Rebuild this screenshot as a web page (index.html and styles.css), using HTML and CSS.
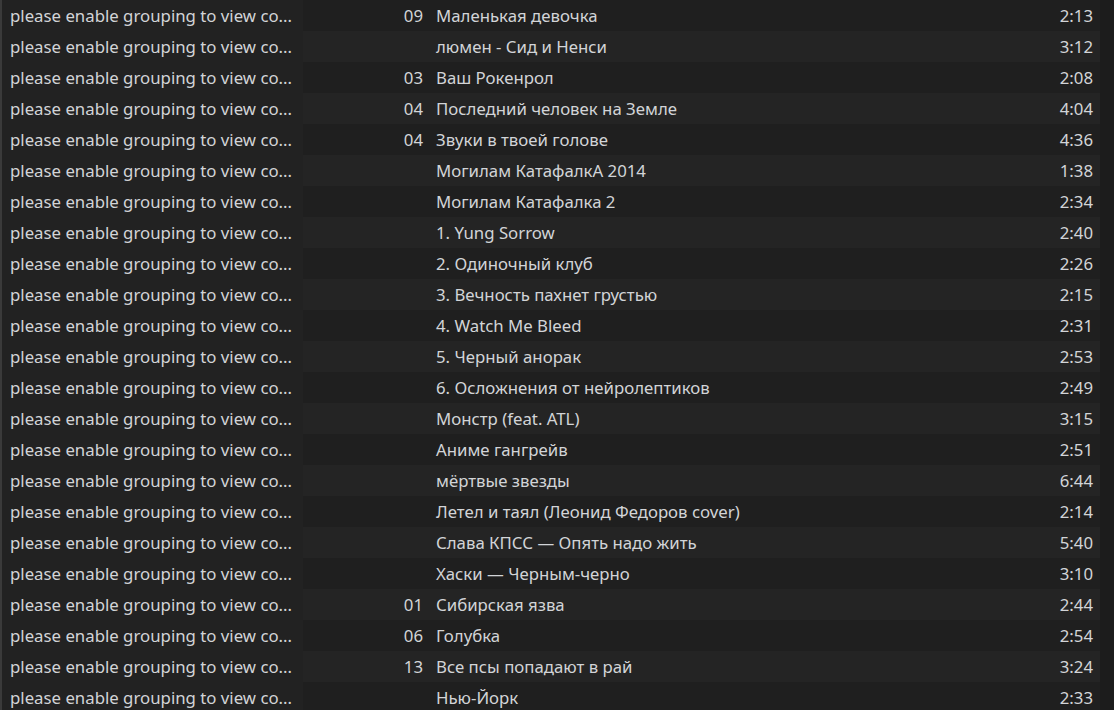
FILE: index.html
```html
<!DOCTYPE html>
<html>
<head>
<meta charset="utf-8">
<link rel="stylesheet" href="styles.css">
</head>
<body>
<div class="view">
  <div class="groups">
    <div class="g">please enable grouping to view co...</div>
    <div class="g">please enable grouping to view co...</div>
    <div class="g">please enable grouping to view co...</div>
    <div class="g">please enable grouping to view co...</div>
    <div class="g">please enable grouping to view co...</div>
    <div class="g">please enable grouping to view co...</div>
    <div class="g">please enable grouping to view co...</div>
    <div class="g">please enable grouping to view co...</div>
    <div class="g">please enable grouping to view co...</div>
    <div class="g">please enable grouping to view co...</div>
    <div class="g">please enable grouping to view co...</div>
    <div class="g">please enable grouping to view co...</div>
    <div class="g">please enable grouping to view co...</div>
    <div class="g">please enable grouping to view co...</div>
    <div class="g">please enable grouping to view co...</div>
    <div class="g">please enable grouping to view co...</div>
    <div class="g">please enable grouping to view co...</div>
    <div class="g">please enable grouping to view co...</div>
    <div class="g">please enable grouping to view co...</div>
    <div class="g">please enable grouping to view co...</div>
    <div class="g">please enable grouping to view co...</div>
    <div class="g">please enable grouping to view co...</div>
    <div class="g">please enable grouping to view co...</div>
  </div>
  <div class="tracks">
    <div class="row"><span class="num">09</span><span class="title">Маленькая девочка</span><span class="dur">2:13</span></div>
    <div class="row"><span class="num"></span><span class="title">люмен - Сид и Ненси</span><span class="dur">3:12</span></div>
    <div class="row"><span class="num">03</span><span class="title">Ваш Рокенрол</span><span class="dur">2:08</span></div>
    <div class="row"><span class="num">04</span><span class="title">Последний человек на Земле</span><span class="dur">4:04</span></div>
    <div class="row"><span class="num">04</span><span class="title">Звуки в твоей голове</span><span class="dur">4:36</span></div>
    <div class="row"><span class="num"></span><span class="title">Могилам КатафалкА 2014</span><span class="dur">1:38</span></div>
    <div class="row"><span class="num"></span><span class="title">Могилам Катафалка 2</span><span class="dur">2:34</span></div>
    <div class="row"><span class="num"></span><span class="title">1. Yung Sorrow</span><span class="dur">2:40</span></div>
    <div class="row"><span class="num"></span><span class="title">2. Одиночный клуб</span><span class="dur">2:26</span></div>
    <div class="row"><span class="num"></span><span class="title">3. Вечность пахнет грустью</span><span class="dur">2:15</span></div>
    <div class="row"><span class="num"></span><span class="title">4. Watch Me Bleed</span><span class="dur">2:31</span></div>
    <div class="row"><span class="num"></span><span class="title">5. Черный анорак</span><span class="dur">2:53</span></div>
    <div class="row"><span class="num"></span><span class="title">6. Осложнения от нейролептиков</span><span class="dur">2:49</span></div>
    <div class="row"><span class="num"></span><span class="title">Монстр (feat. ATL)</span><span class="dur">3:15</span></div>
    <div class="row"><span class="num"></span><span class="title">Аниме гангрейв</span><span class="dur">2:51</span></div>
    <div class="row"><span class="num"></span><span class="title">мёртвые звезды</span><span class="dur">6:44</span></div>
    <div class="row"><span class="num"></span><span class="title">Летел и таял (Леонид Федоров cover)</span><span class="dur">2:14</span></div>
    <div class="row"><span class="num"></span><span class="title">Слава КПСС — Опять надо жить</span><span class="dur">5:40</span></div>
    <div class="row"><span class="num"></span><span class="title">Хаски — Черным-черно</span><span class="dur">3:10</span></div>
    <div class="row"><span class="num">01</span><span class="title">Сибирская язва</span><span class="dur">2:44</span></div>
    <div class="row"><span class="num">06</span><span class="title">Голубка</span><span class="dur">2:54</span></div>
    <div class="row"><span class="num">13</span><span class="title">Все псы попадают в рай</span><span class="dur">3:24</span></div>
    <div class="row"><span class="num"></span><span class="title">Нью-Йорк</span><span class="dur">2:33</span></div>
  </div>
  <div class="edge"></div>
</div>
</body>
</html>
```
FILE: styles.css
```css
html, body {
  margin: 0;
  padding: 0;
  background: #1c1c1c;
  height: 100%;
  overflow: hidden;
}
.view {
  display: grid;
  grid-template-columns: 303px 797px 14px;
  height: 710px;
  font-family: "Noto Sans", "Open Sans", sans-serif;
  font-size: 16.8px;
  color: #d2d4d7;
}
.groups {
  border-left: 2px solid #3a3a3a;
  background: #222222;
}
.g {
  height: 31px;
  line-height: 31px;
  padding-left: 8px;
  white-space: nowrap;
  overflow: hidden;
}
.tracks {
  display: flex;
  flex-direction: column;
}
.row {
  height: 31px;
  line-height: 31px;
  display: grid;
  grid-template-columns: 120px 1fr auto;
  column-gap: 13px;
  padding-right: 7px;
  background: #1f1f1f;
  flex: none;
}
.row:nth-child(even) {
  background: #242424;
}
.num {
  text-align: right;
}
.title {
  white-space: nowrap;
}
.dur {
  text-align: right;
}
.edge {
  background: #1c1c1c;
}
```
